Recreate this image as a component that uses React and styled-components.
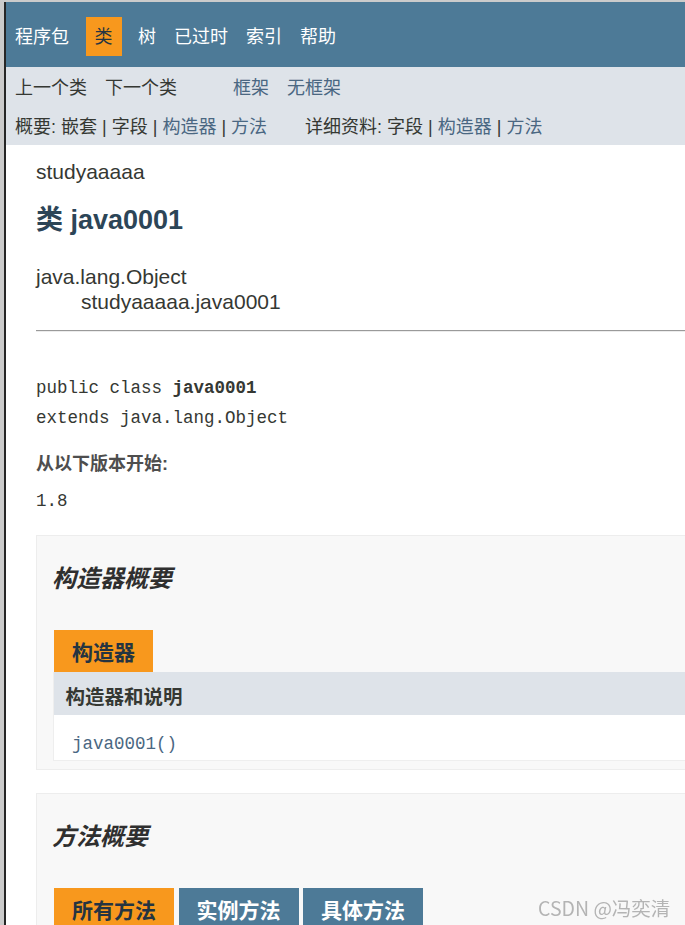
import React from 'react';
import styled, { createGlobalStyle } from 'styled-components';

const GlobalStyle = createGlobalStyle`
  html, body {
    margin: 0;
    padding: 0;
    overflow: hidden;
    background: #cbcbcb;
  }
  body {
    font-family: "Liberation Sans", "Noto Sans CJK SC", sans-serif;
    color: #353833;
  }
`;

const sans = `"Liberation Sans", "Noto Sans CJK SC", sans-serif`;
const mono = `"Liberation Mono", "Noto Sans CJK SC", monospace`;

const Frame = styled.div`
  margin: 2px 0 0 4px;
  border-left: 2px solid #262626;
  width: 780px;
  min-height: 1000px;
  background: #ffffff;
`;

const TopNav = styled.div`
  background: #4d7a97;
  height: 50px;
  padding-top: 15px;
`;

const NavList = styled.ul`
  display: flex;
  margin: 0;
  padding: 0;
  list-style: none;
`;

const NavItem = styled.li`
  padding: 7.5px 9px;
  margin: ${(p) => (p.$active ? '0 7.5px' : '0')};
  font-size: 18px;
  line-height: 24px;
  color: ${(p) => (p.$active ? '#253441' : '#ffffff')};
  background: ${(p) => (p.$active ? '#f8981d' : 'transparent')};
`;

const SubNav = styled.div`
  background: #dee3e9;
  padding: 9px 0 6px 9px;
  display: flex;
  flex-direction: column;
  gap: 15px;
`;

const SubRow = styled.div`
  display: flex;
  font-size: 18px;
  line-height: 24px;
  white-space: nowrap;
`;

const SubList = styled.div`
  display: flex;
  gap: 18px;
  margin-left: ${(p) => p.$offset || 0}px;
`;

const Plain = styled.span`
  color: #353833;
`;

const NavLink = styled.span`
  color: #4a6782;
`;

const Header = styled.div`
  padding: 15px 0 0 30px;
`;

const SubTitle = styled.div`
  font-size: 21px;
  line-height: 24px;
  color: #353833;
`;

const Title = styled.h2`
  margin: 19.5px 0 0;
  font-size: 27px;
  line-height: 32px;
  font-weight: bold;
  color: #2c4557;
`;

const Content = styled.div`
  padding-left: 30px;
`;

const Inheritance = styled.div`
  margin-top: 28.4px;
  font-size: 21px;
  line-height: 25px;
  color: #353833;
`;

const InheritLine = styled.div`
  padding-left: ${(p) => p.$indent || 0}px;
`;

const Rule = styled.hr`
  margin: 16px 0 0;
  border: none;
  border-top: 1px solid #9a9a9a;
  border-bottom: 1px solid #ececec;
`;

const Signature = styled.pre`
  margin: 41.3px 0 0;
  font-family: ${mono};
  font-size: 17.5px;
  line-height: 30px;
  color: #353833;
`;

const Strong = styled.b`
  font-weight: bold;
`;

const SinceLabel = styled.div`
  margin-top: 18.7px;
  font-family: ${sans};
  font-size: 18px;
  line-height: 24px;
  font-weight: bold;
  color: #4e4e4e;
`;

const SinceValue = styled.div`
  margin-top: 13.3px;
  font-family: ${mono};
  font-size: 17.5px;
  line-height: 24px;
  color: #353833;
`;

const SummaryBox = styled.div`
  margin-top: ${(p) => p.$gap}px;
  background: #f8f8f8;
  border: 1px solid #ededed;
  padding: 0 0 8px 17px;
`;

const SummaryTitle = styled.h3`
  margin: 27.7px 0 0 -2px;
  font-size: 24px;
  line-height: 30px;
  font-weight: bold;
  font-style: italic;
  color: #2f2f2f;
`;

const Tabs = styled.div`
  display: flex;
  gap: 4.5px;
  margin-top: 36.3px;
`;

const Tab = styled.div`
  height: 42px;
  padding: 0 18px;
  display: flex;
  align-items: center;
  font-size: 21px;
  font-weight: bold;
  color: ${(p) => (p.$active ? '#253441' : '#ffffff')};
  background: ${(p) => (p.$active ? '#f8981d' : '#4d7a97')};
`;

const Table = styled.div`
  background: #ffffff;
  border: 1px solid #eeeeee;
  border-top: none;
  margin-left: -1px;
`;

const HeadCell = styled.div`
  background: #dee3e9;
  padding: 12px 0 4.5px 11.5px;
  font-size: 19.5px;
  line-height: 26.5px;
  font-weight: bold;
  color: #353833;
`;

const BodyCell = styled.div`
  padding: 17px 0 4px 18px;
  font-family: ${mono};
  font-size: 17.5px;
  line-height: 24px;
  color: #4a6782;
`;

const Watermark = styled.div`
  position: fixed;
  left: 538px;
  top: 895px;
  font-family: "Noto Sans CJK SC", "Noto Sans", sans-serif;
  font-size: 19.5px;
  line-height: 26px;
  color: #b4b4b4;
  white-space: nowrap;
`;

const topItems = ['程序包', '类', '树', '已过时', '索引', '帮助'];

function Trail({ items }) {
  return items.map((it, i) => (
    <React.Fragment key={i}>
      {i > 0 && <Plain> | </Plain>}
      {it.link ? <NavLink>{it.text}</NavLink> : <Plain>{it.text}</Plain>}
    </React.Fragment>
  ));
}

export default function App() {
  return (
    <>
      <GlobalStyle />
      <Frame>
        <TopNav>
          <NavList>
            {topItems.map((t) => (
              <NavItem key={t} $active={t === '类'}>{t}</NavItem>
            ))}
          </NavList>
        </TopNav>

        <SubNav>
          <SubRow>
            <SubList>
              <Plain>上一个类</Plain>
              <Plain>下一个类</Plain>
            </SubList>
            <SubList $offset={56}>
              <NavLink>框架</NavLink>
              <NavLink>无框架</NavLink>
            </SubList>
          </SubRow>
          <SubRow>
            <SubList>
              <span>
                <Plain>概要: </Plain>
                <Trail
                  items={[
                    { text: '嵌套' },
                    { text: '字段' },
                    { text: '构造器', link: true },
                    { text: '方法', link: true },
                  ]}
                />
              </span>
            </SubList>
            <SubList $offset={38}>
              <span>
                <Plain>详细资料: </Plain>
                <Trail
                  items={[
                    { text: '字段' },
                    { text: '构造器', link: true },
                    { text: '方法', link: true },
                  ]}
                />
              </span>
            </SubList>
          </SubRow>
        </SubNav>

        <Header>
          <SubTitle>studyaaaaa</SubTitle>
          <Title>类 java0001</Title>
        </Header>

        <Content>
          <Inheritance>
            <InheritLine>java.lang.Object</InheritLine>
            <InheritLine $indent={45}>studyaaaaa.java0001</InheritLine>
          </Inheritance>
          <Rule />

          <Signature>
            public class <Strong>java0001</Strong>
            {'\n'}extends java.lang.Object
          </Signature>

          <SinceLabel>从以下版本开始:</SinceLabel>
          <SinceValue>1.8</SinceValue>

          <SummaryBox $gap={21.7}>
            <SummaryTitle>构造器概要</SummaryTitle>
            <Tabs>
              <Tab $active>构造器</Tab>
            </Tabs>
            <Table>
              <HeadCell>构造器和说明</HeadCell>
              <BodyCell>java0001()</BodyCell>
            </Table>
          </SummaryBox>

          <SummaryBox $gap={23}>
            <SummaryTitle>方法概要</SummaryTitle>
            <Tabs>
              <Tab $active>所有方法</Tab>
              <Tab>实例方法</Tab>
              <Tab>具体方法</Tab>
            </Tabs>
          </SummaryBox>
        </Content>
      </Frame>
      <Watermark>CSDN @冯奕清</Watermark>
    </>
  );
}
